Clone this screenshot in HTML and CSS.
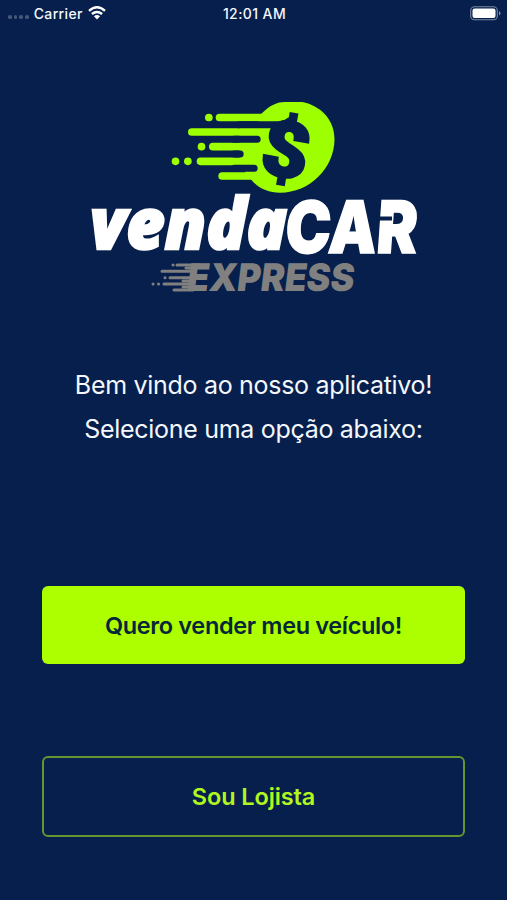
FILE: index.html
```html
<!DOCTYPE html>
<html lang="pt-BR">
<head>
<meta charset="utf-8">
<title>vendaCAR Express</title>
<link rel="stylesheet" href="styles.css">
</head>
<body>
<header class="status">
  <div class="carrier">
    <span class="signal"><i></i><i></i><i></i><i></i></span>
    <span>Carrier</span>
    <svg class="wifi" viewBox="0 0 18 14"><g fill="none" stroke="#fff" stroke-width="2.4"><path d="M1 4.9Q9-2.2 17 4.9"/><path d="M3.9 8Q9 3.8 14.1 8"/></g><path d="M9 13.5 5.9 10.3Q9 7.9 12.1 10.3Z" fill="#fff"/></svg>
  </div>
  <div class="clock">12:01 AM</div>
  <svg class="battery" viewBox="0 0 31 15"><rect x=".7" y=".7" width="26.6" height="13" rx="3.8" fill="none" stroke="#7e89a3" stroke-width="1.1"/><rect x="2.5" y="2.5" width="23" height="9.4" rx="2" fill="#fff"/><path d="M29 5v4.5q1.6-.6 1.6-2.2T29 5Z" fill="#7e89a3"/></svg>
</header>
<main>
  <svg class="logo" viewBox="85 95 340 205" role="img" aria-label="vendaCAR EXPRESS">
    <g transform="translate(160.500 95) scale(.33333)">
      <path fill="#9dff00" d="M304 58C330 30 355 21 375 21H428C485 32 525 75 525 132C525 220 450 293 362 293C325 293 295 278 275 254L240 209V100L300 79Z"/>
      <g stroke="#9dff00" stroke-width="23" stroke-linecap="round">
        <path d="M180 67.500H330M97 111H310M160 155H290M123 199H290M188 243H276M148 67.500h.1M126 155h.1M85 199h.1M48 199h.1"/>
      </g>
      <g stroke="#061f4c" stroke-width="21" stroke-linecap="round">
        <path d="M225 133H293M225 177H242M225 220H284"/>
      </g>
      <path fill="#061f4c" d="M235 79H356Q373 79 387 67L396 88L350 109L338 100H235Z"/>
      <text class="coin" transform="translate(295 231) rotate(10)" textLength="143" lengthAdjust="spacingAndGlyphs">$</text>
    </g>
    <text class="word venda" x="91" y="249" textLength="197" lengthAdjust="spacingAndGlyphs">venda</text>
    <text class="word car" transform="translate(285 253) skewX(-4)" textLength="132" lengthAdjust="spacingAndGlyphs">CAR</text>
    <path d="M372 216.500h21v4h-21z" fill="#061f4c"/>
    <text class="word express" transform="translate(187 291) skewX(-7)" textLength="167" lengthAdjust="spacingAndGlyphs">EXPRESS</text>
    <g stroke="#808080" stroke-width="3" stroke-linecap="round"><path d="M178 265H200M163 271.300H194M171 277.700H194M165 284H194M175 290H194M174 265h.1M166 277.700h.1M159.500 284h.1M154 284h.1"/><path d="M187 268H194M184 281H192M184 287H192"/></g>
  </svg>
  <p class="welcome"><span>Bem vindo ao nosso aplicativo!</span><span>Selecione uma opção abaixo:</span></p>
  <button class="btn sell">Quero vender meu veículo!</button>
  <button class="btn dealer">Sou Lojista</button>
</main>
</body>
</html>
```
FILE: styles.css
```css
* { box-sizing: border-box; }
body {
  margin: 0;
  height: 900px;
  overflow: hidden;
  background: #061f4c;
  color: #f4f7fc;
  font-family: Inter, "Liberation Sans", sans-serif;
}
.status {
  display: grid;
  grid-template-columns: 1fr auto 1fr;
  align-items: center;
  height: 26px;
  padding: 0 6px 0 8px;
  font-size: 14px;
  font-weight: 500;
}
.carrier { display: flex; align-items: center; }
.carrier > span { letter-spacing: .35px; }
.signal { display: flex; gap: 2px; margin: 8px 5px 0 0; }
.signal i { width: 3.700px; height: 3.700px; border-radius: 50%; background: #46577a; }
.wifi { width: 18px; height: 14px; margin-left: 5px; }
.clock { letter-spacing: .4px; }
.battery { width: 31px; height: 15px; justify-self: end; }
main { display: flex; flex-direction: column; align-items: center; padding: 69px 42px 0; }
.logo { width: 340px; height: 205px; overflow: visible; }
.word { font-weight: 900; font-family: Inter, sans-serif; }
.venda, .car { fill: #fff; stroke: #fff; stroke-width: 1.500px; }
.venda { font-family: "Noto Sans", "Open Sans", sans-serif; font-style: italic; font-weight: 900; font-size: 70px; stroke-width: 2.500px; }
.car { font-size: 72px; }
.express { fill: #808080; font-size: 38px; }
.coin { font-family: Roboto, sans-serif; font-weight: 900; font-size: 232px; fill: #061f4c; stroke: #061f4c; stroke-width: 7px; }
.welcome {
  display: flex;
  flex-direction: column;
  align-items: center;
  margin: 63px 0 0;
  font-size: 25px;
  line-height: 44px;
  letter-spacing: -.3px;
  white-space: nowrap;
}
.btn {
  width: 423px;
  border: 0;
  border-radius: 6px;
  font: 600 23.500px Inter, sans-serif;
  letter-spacing: -.35px;
}
.sell { height: 78px; margin-top: 135px; background: #adff00; color: #062739; }
.dealer { height: 81px; margin-top: 92px; background: transparent; border: 2px solid #649630; color: #b0f71f; letter-spacing: -.1px; padding-top: 1px; }
```
